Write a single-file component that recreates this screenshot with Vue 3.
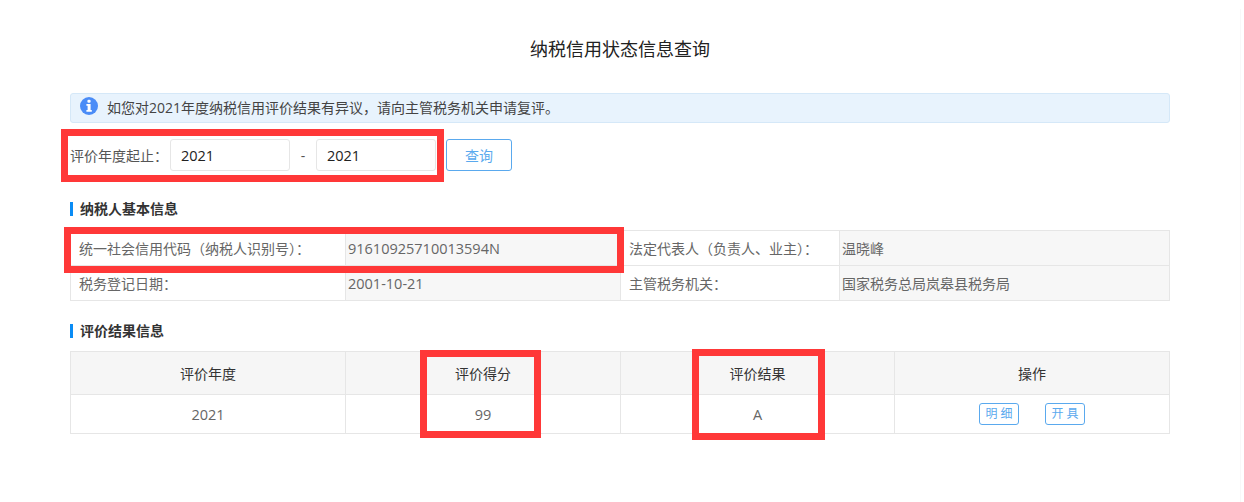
<script setup>
const basic = [
  ['统一社会信用代码\uFF08纳税人识别号\uFF09\uFF1A', '91610925710013594N', '法定代表人\uFF08负责人、业主\uFF09\uFF1A', '温晓峰'],
  ['税务登记日期\uFF1A', '2001-10-21', '主管税务机关\uFF1A', '国家税务总局岚皋县税务局'],
]
const heads = ['评价年度', '评价得分', '评价结果', '操作']
const notice = '如您对2021年度纳税信用评价结果有异议\uFF0C请向主管税务机关申请复评。'
const filterLabel = '评价年度起止\uFF1A'
</script>

<template>
  <div class="page">
    <h1 class="title">纳税信用状态信息查询</h1>

    <div class="alert">
      <svg class="info" width="18" height="18" viewBox="0 0 18 18">
        <circle cx="9" cy="9" r="9" fill="#4a8cf7" />
        <rect x="7.4" y="2.8" width="3.2" height="3" rx="1.2" fill="#fff" />
        <path d="M6.4 7h4.2v6h1.2v1.8H6.4V13h1.2V8.8H6.4z" fill="#fff" />
      </svg>
      <span>{{ notice }}</span>
    </div>

    <div class="filter">
      <label class="filter-label">{{ filterLabel }}</label>
      <input class="year" value="2021" />
      <span class="dash">-</span>
      <input class="year" value="2021" />
      <button class="query">查询</button>
    </div>

    <h2 class="section first">纳税人基本信息</h2>
    <table class="basic">
      <colgroup>
        <col style="width: 275px" /><col style="width: 275px" /><col style="width: 219px" /><col />
      </colgroup>
      <tbody>
        <tr v-for="row in basic" :key="row[0]">
          <td class="lbl">{{ row[0] }}</td>
          <td class="val num">{{ row[1] }}</td>
          <td class="lbl">{{ row[2] }}</td>
          <td class="val">{{ row[3] }}</td>
        </tr>
      </tbody>
    </table>

    <h2 class="section second">评价结果信息</h2>
    <table class="result">
      <colgroup>
        <col style="width: 275px" /><col style="width: 275px" /><col style="width: 274px" /><col />
      </colgroup>
      <thead>
        <tr><th v-for="h in heads" :key="h">{{ h }}</th></tr>
      </thead>
      <tbody>
        <tr>
          <td class="num">2021</td>
          <td class="num">99</td>
          <td class="num">A</td>
          <td>
            <div class="ops">
              <a class="op">明 细</a>
              <a class="op">开 具</a>
            </div>
          </td>
        </tr>
      </tbody>
    </table>

    <i class="edge"></i>
    <i class="mark m1"></i>
    <i class="mark m2"></i>
    <i class="mark m3"></i>
    <i class="mark m4"></i>
  </div>
</template>

<style scoped>
.page {
  position: relative;
  box-sizing: border-box;
  width: 1244px;
  height: 502px;
  padding: 0 74px 0 70px;
  background: #fff;
  font-family: "Open Sans", "Noto Sans CJK SC", sans-serif;
  font-size: 14px;
  color: #666;
  overflow: hidden;
}
.title {
  margin: 0;
  padding-top: 37px;
  height: 56px;
  box-sizing: border-box;
  font-size: 18px;
  line-height: 24px;
  font-weight: 400;
  color: #222;
  text-align: center;
}
.alert {
  display: flex;
  align-items: center;
  box-sizing: border-box;
  height: 30px;
  margin-top: 37px;
  padding-left: 9px;
  border: 1px solid #d5e8f8;
  border-radius: 3px;
  background: #e8f3fd;
  color: #444;
  font-size: 14px;
  line-height: 20px;
}
.info {
  flex: none;
  margin: -4px 9px 0 0;
}
.filter {
  display: flex;
  align-items: center;
  height: 32px;
  margin-top: 16px;
}
.filter-label {
  width: 100px;
  color: #555;
  white-space: nowrap;
}
.year {
  box-sizing: border-box;
  width: 120px;
  height: 32px;
  padding: 0 10px;
  border: 1px solid #e6e6e6;
  border-radius: 3px;
  outline: none;
  font: 14.5px "Open Sans", sans-serif;
  color: #222;
}
.dash {
  width: 26px;
  text-align: center;
  color: #555;
}
.query {
  box-sizing: border-box;
  width: 66px;
  height: 32px;
  margin-left: 10px;
  padding: 0;
  border: 1px solid #5aa9ee;
  border-radius: 3px;
  background: #fff;
  color: #5aa9ee;
  font: 14px "Noto Sans CJK SC", sans-serif;
}
.section {
  margin: 0;
  padding-left: 7px;
  border-left: 3px solid #0a8cf5;
  height: 14px;
  font-size: 14px;
  line-height: 14px;
  font-weight: 700;
  color: #333;
}
.section.first { margin-top: 31px; }
.section.second { margin-top: 23px; }
table {
  width: 1100px;
  table-layout: fixed;
  border-collapse: collapse;
}
td, th {
  box-sizing: border-box;
  padding: 0;
  border: 1px solid #e6e6e6;
  font-weight: 400;
}
.basic { margin-top: 14px; }
.basic td {
  height: 35px;
  padding: 0 2px;
  font-size: 14px;
  color: #666;
}
.basic .lbl { background: #fff; padding-left: 8px; }
.basic .val { background: #f7f7f7; }
.basic td.num { font-size: 14.5px; }
.result { margin-top: 13px; }
.result th {
  height: 43px;
  background: #f6f6f6;
  color: #333;
  font-size: 14px;
  text-align: center;
}
.result td {
  height: 39px;
  text-align: center;
  font-size: 14px;
  color: #666;
}
.result td.num { font-size: 14.5px; }
.ops {
  display: flex;
  justify-content: center;
  gap: 26px;
}
.op {
  box-sizing: border-box;
  width: 40px;
  height: 22px;
  border: 1px solid #5aa9ee;
  border-radius: 3px;
  color: #5aa9ee;
  font-size: 12px;
  line-height: 20px;
  text-align: center;
}
.edge {
  position: absolute;
  right: 3px;
  top: 9px;
  bottom: 0;
  width: 1px;
  background: #f8f8f8;
}
.mark {
  position: absolute;
  box-sizing: border-box;
  border: 7px solid #ff3838;
  pointer-events: none;
}
.m1 { left: 61px; top: 129px; width: 383px; height: 53px; }
.m2 { left: 64px; top: 227px; width: 560px; height: 46px; }
.m3 { left: 420px; top: 350px; width: 121px; height: 88px; }
.m4 { left: 692px; top: 349px; width: 133px; height: 91px; }
</style>
